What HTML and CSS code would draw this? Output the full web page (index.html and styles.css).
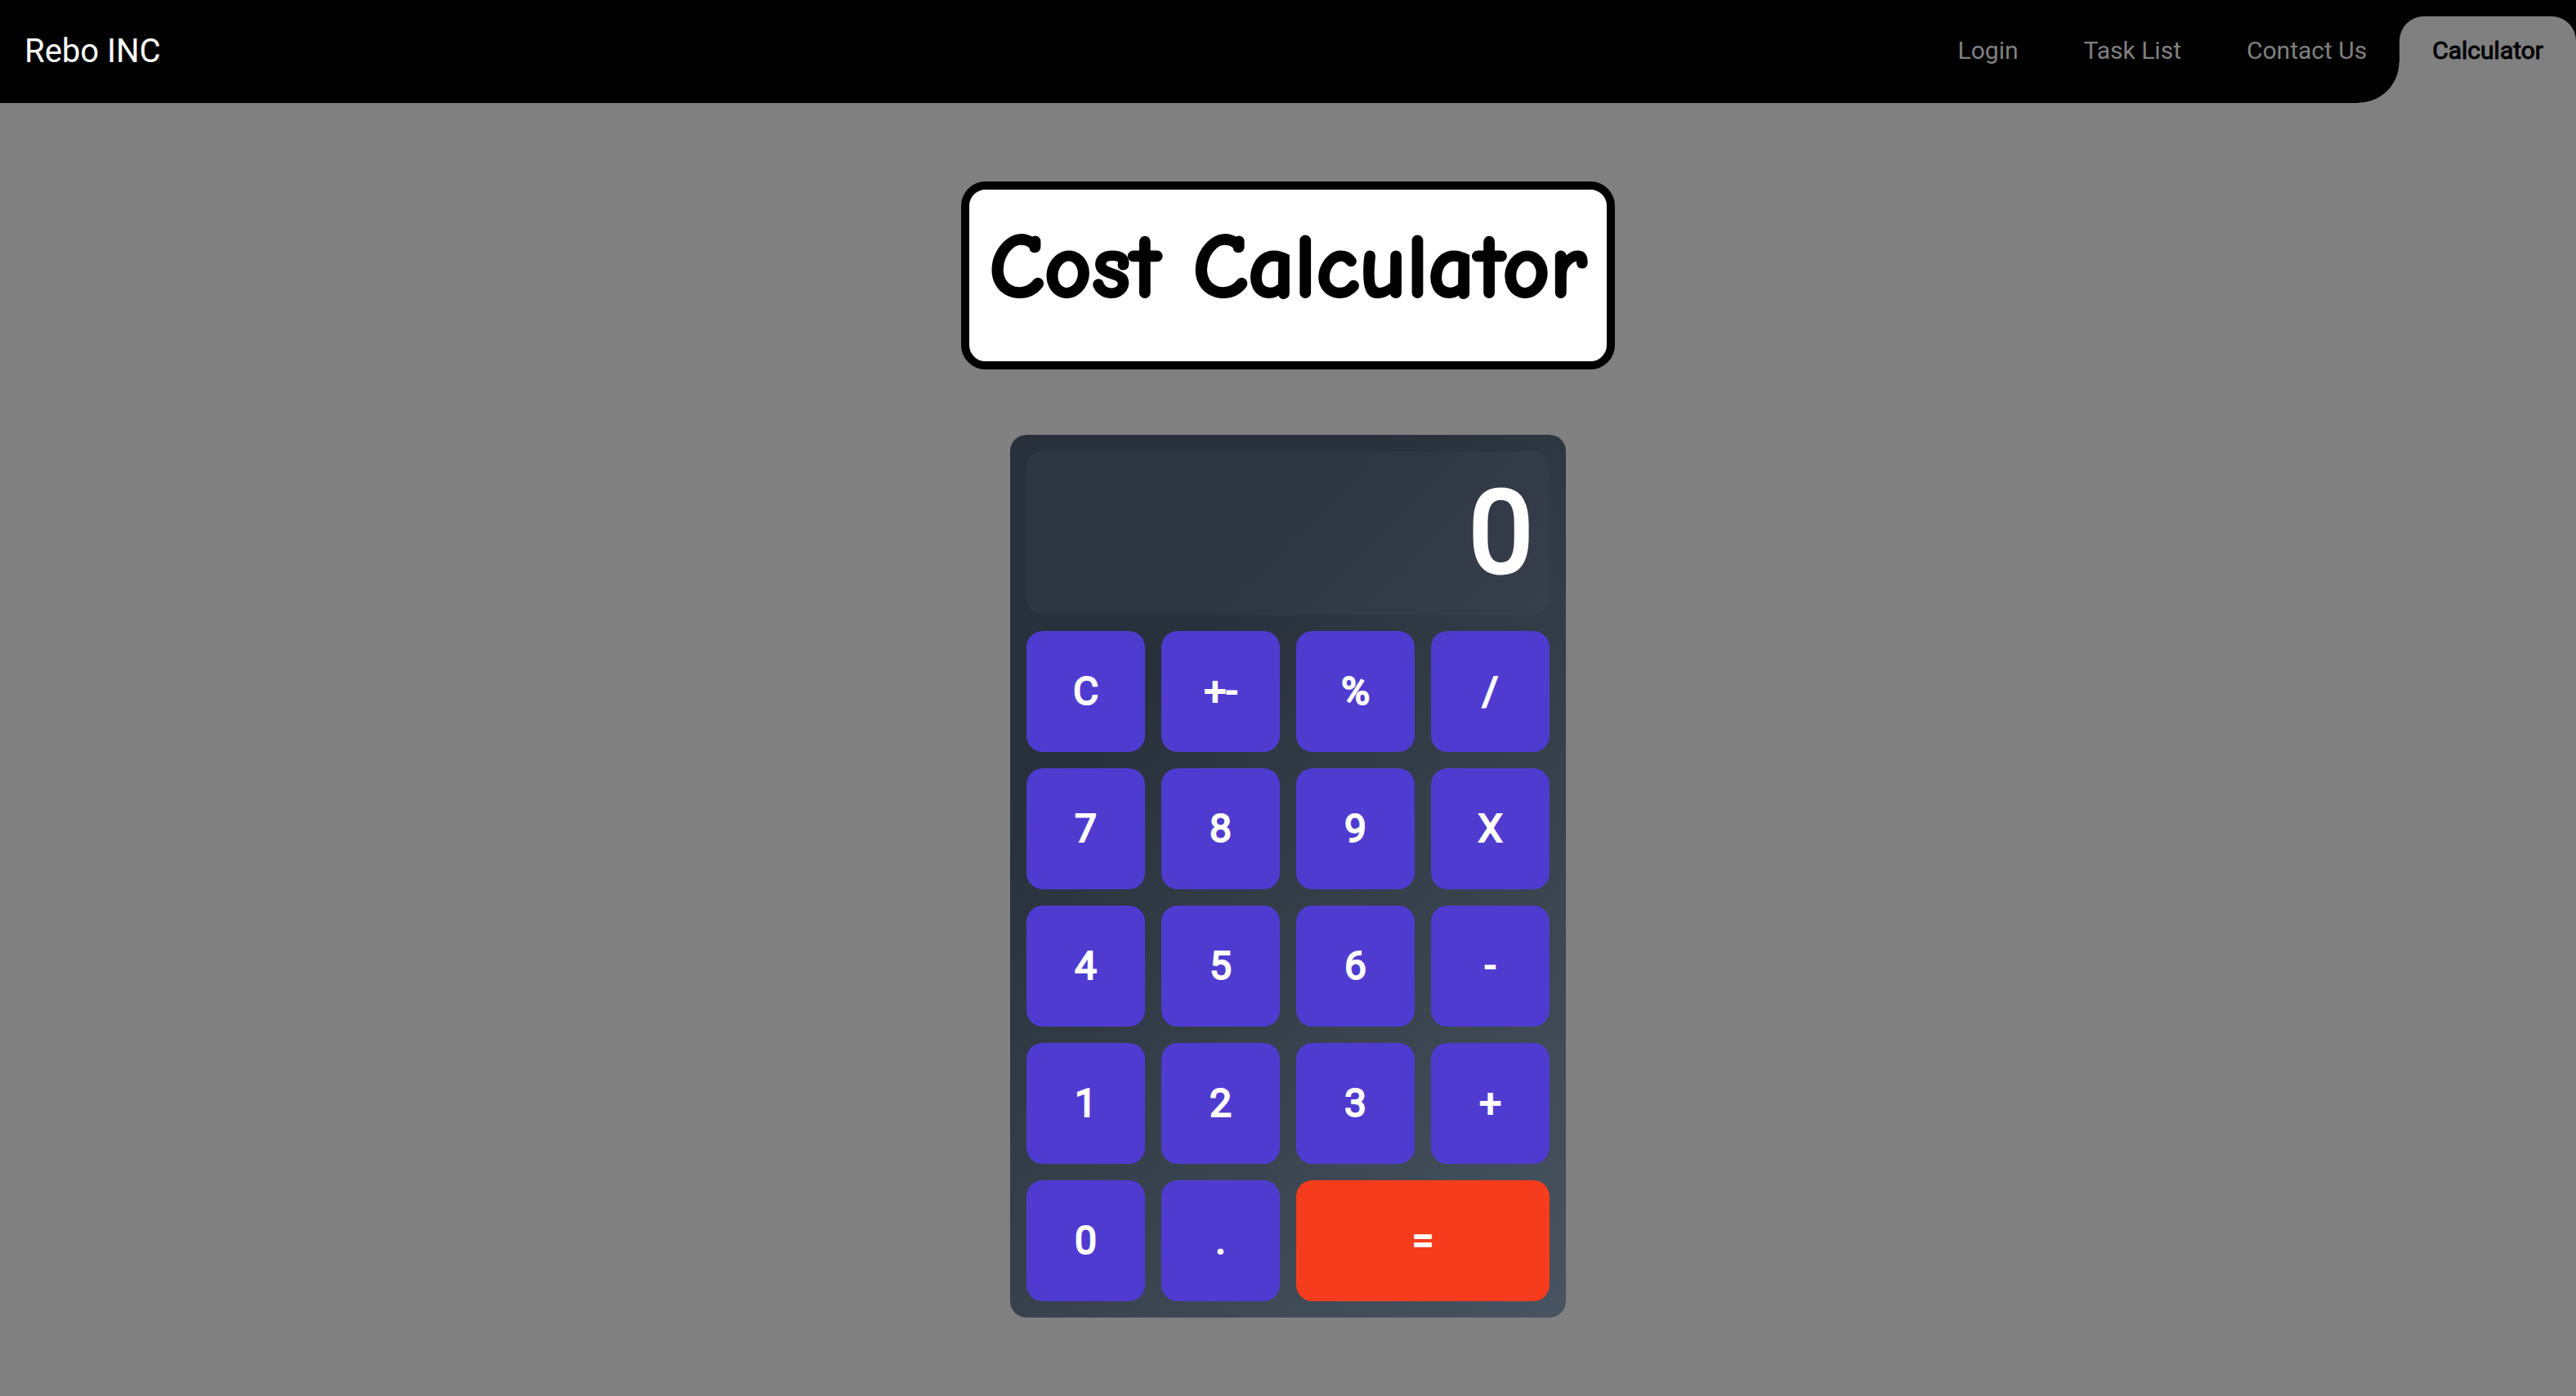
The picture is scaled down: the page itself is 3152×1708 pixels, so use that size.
FILE: index.html
```html
<!DOCTYPE html>
<html lang="en">
<head>
<meta charset="utf-8">
<meta name="viewport" content="width=device-width, initial-scale=1">
<title>Cost Calculator</title>
<link rel="stylesheet" href="styles.css">
</head>
<body>
<nav class="navbar">
  <a class="brand" href="#">Rebo INC</a>
  <ul class="nav-list">
    <li><a class="nav-link" href="#">Login</a></li>
    <li><a class="nav-link" href="#">Task List</a></li>
    <li><a class="nav-link" href="#">Contact Us</a></li>
    <li><a class="nav-link active" href="#" aria-current="page">Calculator</a></li>
  </ul>
</nav>
<main class="content">
  <h1 class="title">Cost Calculator</h1>
  <section class="calculator" aria-label="Calculator">
    <output class="screen">0</output>
    <div class="keys">
      <button class="key" type="button">C</button>
      <button class="key" type="button">+-</button>
      <button class="key" type="button">%</button>
      <button class="key" type="button">/</button>
      <button class="key" type="button">7</button>
      <button class="key" type="button">8</button>
      <button class="key" type="button">9</button>
      <button class="key" type="button">X</button>
      <button class="key" type="button">4</button>
      <button class="key" type="button">5</button>
      <button class="key" type="button">6</button>
      <button class="key" type="button">-</button>
      <button class="key" type="button">1</button>
      <button class="key" type="button">2</button>
      <button class="key" type="button">3</button>
      <button class="key" type="button">+</button>
      <button class="key" type="button">0</button>
      <button class="key" type="button">.</button>
      <button class="key equals" type="button">=</button>
    </div>
  </section>
</main>
</body>
</html>
```
FILE: styles.css
```css
* {
  box-sizing: border-box;
}

body {
  margin: 0;
  min-height: 100vh;
  background: #808080;
  font-family: Roboto, sans-serif;
}

.navbar {
  display: flex;
  justify-content: space-between;
  align-items: stretch;
  min-height: 126px;
  background: #000;
}

.brand {
  align-self: center;
  padding-left: 30px;
  font-size: 40px;
  line-height: 60px;
  color: #fff;
  text-decoration: none;
}

.nav-list {
  display: flex;
  margin: 0;
  padding: 20px 0 0;
  list-style: none;
}

.nav-list li {
  display: flex;
}

.nav-link {
  position: relative;
  padding: 20px 40px;
  font-size: 30px;
  line-height: 44px;
  color: #808080;
  text-decoration: none;
}

.nav-link.active {
  border-radius: 30px 30px 0 0;
  background: #808080;
  color: #000;
  -webkit-text-stroke: 1px #000;
}

/* Inverted corner that joins the active tab to the page */
.nav-link.active::before {
  content: "";
  position: absolute;
  right: 100%;
  bottom: 0;
  width: 50px;
  height: 50px;
  background: radial-gradient(circle at 0 0, #000 49px, #808080 50px);
}

.content {
  display: flex;
  flex-direction: column;
  align-items: center;
  gap: 80px;
  padding: 96px 20px;
}

.title {
  margin: 0;
  padding: 40px 24px 60px;
  border: 10px solid #000;
  border-radius: 30px;
  background: #fff;
  font-family: "Comic Sans MS", "Comic Neue", cursive;
  font-size: 112px;
  line-height: 110px;
  -webkit-text-stroke: 3px #000;
}

.calculator {
  display: flex;
  flex-direction: column;
  gap: 20px;
  width: 100%;
  max-width: 680px;
  padding: 20px;
  border-radius: 20px;
  background: linear-gradient(315deg, #485461 0%, #28313b 74%);
}

.screen {
  padding: 0 20px;
  border-radius: 20px;
  background: rgba(76, 75, 99, 0.2);
  color: #fff;
  font-size: 140px;
  line-height: 200px;
  text-align: right;
  -webkit-text-stroke: 5px #fff;
}

.keys {
  display: grid;
  grid-template-columns: repeat(4, 1fr);
  gap: 20px;
}

.key {
  height: 148px;
  padding: 0 0 2px;
  border: 0;
  border-radius: 20px;
  background: #503bd0;
  color: #fff;
  font-family: inherit;
  font-size: 48px;
  -webkit-text-stroke: 2px #fff;
  cursor: pointer;
}

.equals {
  grid-column: span 2;
  background: #f53c1d;
}
```
